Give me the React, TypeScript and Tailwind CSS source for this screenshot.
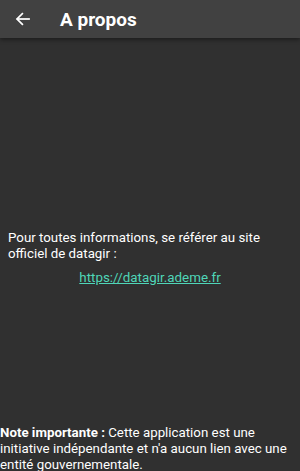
import React from "react";

export default function App() {
  return (
    <div
      className="w-[300px] h-[471px] bg-[#303030] text-white flex flex-col overflow-hidden"
      style={{ fontFamily: "Roboto, 'Liberation Sans', sans-serif" }}
    >
      <div className="h-[38px] bg-[#414141] flex items-center shrink-0 shadow-[0_2px_4px_rgba(0,0,0,0.4)] relative z-10">
        <svg width="16" height="16" viewBox="0 0 24 24" className="ml-[15px]" fill="none" stroke="white" strokeWidth="2.6" strokeLinecap="square">
          <path d="M21 12H4" />
          <path d="M11 4l-8 8 8 8" />
        </svg>
        <span className="ml-[29px] text-[19px] font-bold leading-none">A propos</span>
      </div>
      <div className="flex-1 flex flex-col px-2 pt-[192px]">
        <p className="text-[13.3px] leading-[16px]">
          Pour toutes informations, se référer au site officiel de datagir :
        </p>
        <a className="mt-[8px] text-center text-[13.4px] leading-[16px] text-[#4fd6b8] underline" href="#">
          https://datagir.ademe.fr
        </a>
      </div>
      <p className="text-[13.3px] leading-[16px] mb-[-2px]">
        <span className="font-bold">Note importante :</span> Cette application est une initiative indépendante et n'a aucun lien avec une entité gouvernementale.
      </p>
    </div>
  );
}
